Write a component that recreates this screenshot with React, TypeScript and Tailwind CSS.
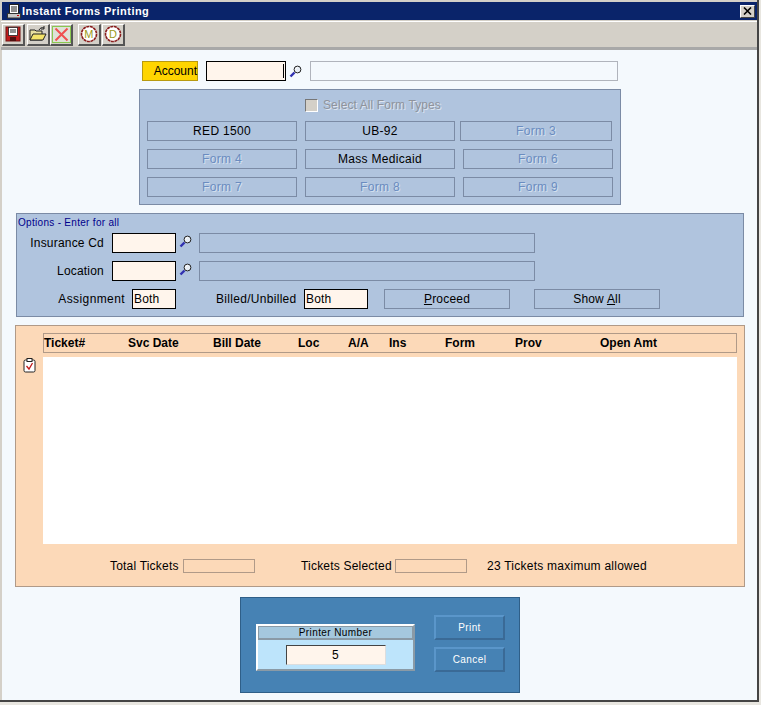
import React from "react";

const Mag = () => (
  <svg width="13" height="13" viewBox="0 0 13 13" className="shrink-0">
    <line x1="1.5" y1="11.5" x2="5.5" y2="7.5" stroke="#3030b0" strokeWidth="2.4" />
    <circle cx="8.5" cy="4.5" r="3.4" fill="#e8eef5" stroke="#222" strokeWidth="1" />
    <path d="M6.6 4.5a2 2 0 0 1 2-2" stroke="#fff" fill="none" />
  </svg>
);

const TB = ({ children, className = "" }: { children: React.ReactNode; className?: string }) => (
  <div className={`w-[23px] h-[22px] flex items-center justify-center bg-[#d4d0c8] border-t border-l border-t-white border-l-white border-r-2 border-b-2 border-r-[#555] border-b-[#555] ${className}`}>
    {children}
  </div>
);

const FormBtn = ({ label, on, className = "" }: { label: string; on?: boolean; className?: string }) => (
  <div
    className={`h-[20px] w-[150px] flex items-center justify-center border border-[#7b8ba5] tracking-[0.3px] ${
      on ? "text-black" : "text-[#6a8cc0] [text-shadow:1px_1px_0_#d5e0ee]"
    } ${className}`}
  >
    {label}
  </div>
);

const Circle = ({ l }: { l: string }) => (
  <svg width="18" height="18" viewBox="0 0 18 18">
    <circle cx="9" cy="9" r="7.5" fill="#fff" stroke="#8a1c1c" strokeWidth="1.6" strokeDasharray="3 0.6" />
    <text x="9" y="13" textAnchor="middle" fontSize="11" fill="#9a9a20" fontFamily="Liberation Sans, sans-serif">
      {l}
    </text>
  </svg>
);

const cols: [string, string][] = [
  ["Ticket#", "w-[84px]"],
  ["Svc Date", "w-[85px]"],
  ["Bill Date", "w-[85px]"],
  ["Loc", "w-[50px]"],
  ["A/A", "w-[41px]"],
  ["Ins", "w-[56px]"],
  ["Form", "w-[70px]"],
  ["Prov", "w-[85px]"],
  ["Open Amt", "w-[100px]"],
];

export default function App() {
  return (
    <div className="w-[761px] h-[705px] bg-[#e8e6e0] overflow-hidden text-[12px] leading-none text-black whitespace-nowrap tracking-[0.2px] [font-family:Liberation_Sans,Arial,sans-serif]">
      <div className="w-[759px] h-[702px] flex flex-col border-r-2 border-b-2 border-r-[#444] border-b-[#444] bg-[#d4d0c8] pl-[1px] pt-[1px]">
        {/* title bar */}
        <div className="h-[18px] mt-[1px] ml-[1px] bg-[#0a246a] flex items-center pl-[5px] pr-[2px] shrink-0">
          <svg width="14" height="15" viewBox="0 0 14 15" className="shrink-0">
            <rect x="2.5" y="0.5" width="9" height="9" fill="#fff" stroke="#222" />
            <path d="M4 3h6M4 5h6M4 7h6" stroke="#222" />
            <rect x="0.5" y="9.5" width="13" height="4.5" fill="#c8c8c8" stroke="#333" />
            <rect x="10" y="11" width="2" height="1" fill="#c00" />
          </svg>
          <span className="ml-[1px] text-white font-bold text-[11px] tracking-[0.45px]">Instant Forms Printing</span>
          <div className="ml-auto w-[15px] h-[13px] bg-[#d4d0c8] flex items-center justify-center border border-t-white border-l-white border-r-[#444] border-b-[#444]">
            <svg width="9" height="8" viewBox="0 0 9 8">
              <path d="M1 0.5l7 7M8 0.5l-7 7" stroke="#000" strokeWidth="1.6" />
            </svg>
          </div>
        </div>
        {/* toolbar */}
        <div className="h-[29px] mt-[1px] border-t border-t-white border-b-[3px] border-b-[#a8a8a8] bg-[#d4d0c8] flex items-center pl-[1px] shrink-0">
          <TB>
            <svg width="16" height="16" viewBox="0 0 16 16">
              <rect x="1" y="1" width="14" height="14" fill="#c01c1c" stroke="#701010" />
              <rect x="3.5" y="1.5" width="9" height="8" fill="#fff" stroke="#222" strokeWidth="0.8" />
              <path d="M5 4h6M5 6h6" stroke="#222" />
              <rect x="5" y="11" width="6" height="4" fill="#501010" />
            </svg>
          </TB>
          <TB className="ml-[2px]">
            <svg width="18" height="16" viewBox="0 0 18 16">
              <path d="M1 4h5l1 1h6v9H1z" fill="#e8e0a0" stroke="#222" />
              <path d="M1 14l3-6h13l-3 6z" fill="#f4e46a" stroke="#222" />
              <path d="M10 4c1-2 3-3 5-2M15 0v3h-3" stroke="#222" fill="none" />
            </svg>
          </TB>
          <TB>
            <svg width="19" height="17" viewBox="0 0 19 17">
              <rect x="0.5" y="0.5" width="18" height="16" fill="#dfe2d8" stroke="#8ac850" />
              <path d="M3.5 2.5l12 12M15.5 2.5l-12 12" stroke="#f05050" strokeWidth="2" />
            </svg>
          </TB>
          <TB className="ml-[5px]"><Circle l="M" /></TB>
          <TB className="ml-[1px]"><Circle l="D" /></TB>
        </div>

        {/* body */}
        <div className="flex-1 min-h-0 bg-[#f4f9fd] ml-[1px] flex flex-col">
          {/* account row */}
          <div className="h-[20px] mt-[11px] ml-[140px] flex items-center shrink-0">
            <div className="w-[56px] h-[20px] bg-[#ffd500] border border-[#b89a10] flex items-center justify-end tracking-normal">Account</div>
            <div className="ml-[8px] w-[80px] h-[20px] bg-[#fff5ec] border border-black flex items-center justify-end pr-[1px]">
              <div className="w-px h-[14px] bg-black" />
            </div>
            <div className="ml-[3px]"><Mag /></div>
            <div className="ml-[8px] w-[308px] h-[20px] border border-[#b0b4bc] bg-[#f4f9fd]" />
          </div>

          {/* form types */}
          <div className="ml-[137px] mt-[8px] w-[482px] h-[116px] shrink-0 bg-[#b0c4de] border border-[#7b8ba5] pl-[7px] pt-[8px]">
            <div className="h-[14px] ml-[158px] flex items-center">
              <div className="w-[13px] h-[13px] bg-[#d4d0c8] border border-t-[#777] border-l-[#777] border-r-white border-b-white" />
              <span className="ml-[5px] text-[#8f939c] tracking-[0.1px] [text-shadow:1px_1px_0_#dfe6f0]">Select All Form Types</span>
            </div>
            <div className="mt-[9px] flex">
              <FormBtn label="RED 1500" on />
              <FormBtn label="UB-92" on className="ml-[8px]" />
              <FormBtn label="Form 3" className="ml-[5px] w-[152px]" />
            </div>
            <div className="mt-[8px] flex">
              <FormBtn label="Form 4" />
              <FormBtn label="Mass Medicaid" on className="ml-[8px]" />
              <FormBtn label="Form 6" className="ml-[8px]" />
            </div>
            <div className="mt-[8px] flex">
              <FormBtn label="Form 7" />
              <FormBtn label="Form 8" className="ml-[8px]" />
              <FormBtn label="Form 9" className="ml-[8px]" />
            </div>
          </div>

          {/* options */}
          <div className="ml-[14px] mt-[8px] w-[728px] h-[104px] shrink-0 bg-[#b0c4de] border border-[#7b8ba5]">
            <div className="ml-[1px] mt-[3px] h-[11px] text-[10px] text-[#00008b] tracking-[0.3px] flex items-center">Options - Enter for all</div>
            <div className="mt-[5px] h-[20px] flex items-center">
              <div className="w-[87px] text-right">Insurance Cd</div>
              <div className="ml-[8px] w-[64px] h-[20px] bg-[#fff5ec] border border-black" />
              <div className="ml-[3px] -mt-[3px]"><Mag /></div>
              <div className="ml-[7px] w-[336px] h-[20px] border border-[#7b8ba5]" />
            </div>
            <div className="mt-[8px] h-[20px] flex items-center">
              <div className="w-[87px] text-right">Location</div>
              <div className="ml-[8px] w-[64px] h-[20px] bg-[#fff5ec] border border-black" />
              <div className="ml-[3px] -mt-[3px]"><Mag /></div>
              <div className="ml-[7px] w-[336px] h-[20px] border border-[#7b8ba5]" />
            </div>
            <div className="mt-[8px] h-[20px] flex items-center">
              <div className="w-[108px] text-right tracking-[0.4px]">Assignment</div>
              <div className="ml-[7px] w-[44px] h-[20px] bg-[#fff5ec] border border-black flex items-center pl-[1px]">Both</div>
              <div className="ml-[40px] w-[81px] tracking-[0.3px]">Billed/Unbilled</div>
              <div className="ml-[7px] w-[64px] h-[20px] bg-[#fff5ec] border border-black flex items-center pl-[1px]">Both</div>
              <div className="ml-[16px] w-[126px] h-[20px] border border-[#7b8ba5] flex items-center justify-center">
                <span><span className="underline">P</span>roceed</span>
              </div>
              <div className="ml-[24px] w-[126px] h-[20px] border border-[#7b8ba5] flex items-center justify-center">
                <span>Show <span className="underline">A</span>ll</span>
              </div>
            </div>
          </div>

          {/* tickets */}
          <div className="ml-[13px] mt-[8px] w-[730px] h-[262px] shrink-0 bg-[#fcd9b8] border border-[#b09a88] pt-[7px] flex flex-col">
            <div className="ml-[27px] w-[694px] h-[20px] shrink-0 border border-[#b09a88] flex items-center font-bold tracking-normal">
              {cols.map(([c, w]) => (
                <div key={c} className={`${w} shrink-0`}>{c}</div>
              ))}
            </div>
            <div className="flex mt-[4px] h-[187px] shrink-0">
              <div className="w-[27px] pl-[7px] pt-[1px]">
                <svg width="13" height="15" viewBox="0 0 13 15">
                  <rect x="1" y="2" width="11" height="12" rx="1.5" fill="#fff" stroke="#222" />
                  <rect x="4" y="0.5" width="5" height="3" fill="#fff" stroke="#222" />
                  <path d="M3.5 8l2.5 3 3.5-6" stroke="#c01818" strokeWidth="1.3" fill="none" />
                </svg>
              </div>
              <div className="w-[694px] bg-white" />
            </div>
            <div className="mt-[15px] h-[14px] flex items-center shrink-0">
              <div className="ml-[94px] w-[69px]">Total Tickets</div>
              <div className="ml-[4px] w-[72px] h-[14px] border border-[#b09a88]" />
              <div className="ml-[46px] w-[90px]">Tickets Selected</div>
              <div className="ml-[4px] w-[72px] h-[14px] border border-[#b09a88]" />
              <div className="ml-[20px] tracking-[0.25px]">23 Tickets maximum allowed</div>
            </div>
          </div>

          {/* print */}
          <div className="ml-[238px] mt-[10px] w-[280px] h-[96px] shrink-0 bg-[#4682b4] border border-[#2f5f88] flex text-[10px]">
            <div className="ml-[15px] mt-[26px] w-[159px] h-[47px] bg-[#bde4fb] border-2 border-t-white border-l-white border-r-[#8a9aa6] border-b-[#8a9aa6] flex flex-col">
              <div className="h-[11px] bg-[#a5c8de] border-t border-l border-r border-[#8a9aa6] border-b-2 flex items-center justify-center tracking-[0.4px] box-content">Printer Number</div>
              <div className="mx-auto mt-[5px] w-[100px] h-[20px] bg-[#fff5ec] border border-t-[#444] border-l-[#444] border-r-[#ddd] border-b-[#ddd] flex items-center justify-center text-[12px]">5</div>
            </div>
            <div className="ml-[19px] mt-[17px] flex flex-col">
              <div className="w-[71px] h-[25px] pt-[1px] bg-[#4682b4] border-2 border-t-[#5a96ca] border-l-[#5a96ca] border-r-[#3a6a96] border-b-[#3a6a96] text-white flex items-center justify-center tracking-[0.4px]">Print</div>
              <div className="mt-[7px] w-[71px] h-[25px] pt-[1px] bg-[#4682b4] border-2 border-t-[#5a96ca] border-l-[#5a96ca] border-r-[#3a6a96] border-b-[#3a6a96] text-white flex items-center justify-center tracking-[0.4px]">Cancel</div>
            </div>
          </div>
        </div>
      </div>
    </div>
  );
}
